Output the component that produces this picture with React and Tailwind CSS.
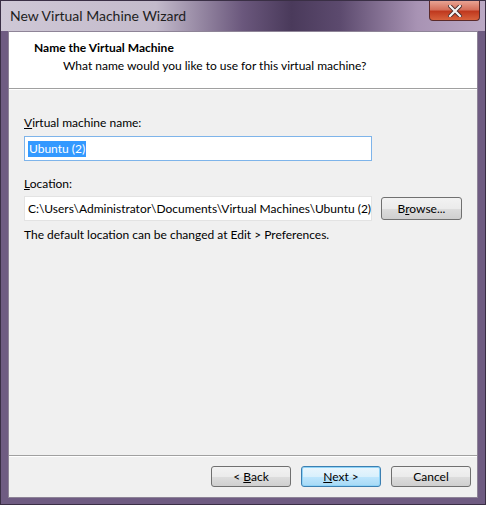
export default function App() {
  const font = { fontFamily: 'Lato, "Noto Sans", sans-serif' };

  return (
    <div
      className="w-[486px] h-[505px] flex flex-col bg-[#6f5c82] border border-[#3a2f45] text-[12px] text-black"
      style={font}
    >
      {/* title bar */}
      <div className="h-[30px] flex items-start justify-between bg-[linear-gradient(90deg,#cfc8d6_0%,#c3bacb_32%,#6a577c_50%,#4a3a5b_60%,#5c4a6e_70%,#a893b4_86%,#bba9c4_100%)]">
        <span className="pl-[9px] pt-[6px] text-[14px] leading-[18px] text-[#1e1e1e]">
          New Virtual Machine Wizard
        </span>
        <button className="mr-[5px] w-[51px] h-[20px] rounded-b-[4px] border border-t-0 border-[#5a2a2a] bg-[linear-gradient(180deg,#e8a393_0%,#d5705c_45%,#c0391f_55%,#d7623d_100%)] flex items-center justify-center">
          <svg width="14" height="12" viewBox="0 0 14 12">
            <path d="M2 1 L12 11 M12 1 L2 11" stroke="#4a2a2a" strokeWidth="4" strokeLinecap="square" />
            <path d="M2 1 L12 11 M12 1 L2 11" stroke="#f4f4f4" strokeWidth="2.2" strokeLinecap="square" />
          </svg>
        </button>
      </div>

      {/* client area */}
      <div className="flex-1 mx-[7px] mb-[6px] flex flex-col bg-[#f0f0f0] border border-[#8e8497]">
        {/* header */}
        <div className="h-[57px] bg-white border-b border-[#a0a0a0] pl-[25px] pt-[8px]">
          <div className="font-bold leading-[16px]">Name the Virtual Machine</div>
          <div className="pl-[29px] pt-[2px] leading-[16px]">
            What name would you like to use for this virtual machine?
          </div>
        </div>

        {/* body */}
        <div className="flex-1 border-t border-white pl-[15px] pt-[25px]">
          <div className="leading-[16px]">
            <span className="underline">V</span>irtual machine name:
          </div>
          <div className="mt-[5px] w-[348px] h-[25px] bg-white border border-[#7eb4ea] flex items-center pl-[3px]">
            <span className="bg-[#3399ff] text-white leading-[16px] px-[1px]">Ubuntu (2)</span>
          </div>

          <div className="mt-[15px] leading-[16px]">
            <span className="underline">L</span>ocation:
          </div>
          <div className="mt-[4px] flex items-center gap-[9px]">
            <div className="w-[348px] h-[25px] bg-white border border-[#e3e3e3] flex items-center pl-[3px] whitespace-nowrap overflow-hidden">
              C:\Users\Administrator\Documents\Virtual Machines\Ubuntu (2)
            </div>
            <button className="w-[81px] h-[23px] rounded-[3px] border border-[#707070] bg-[linear-gradient(180deg,#f2f2f2_0%,#ebebeb_50%,#dddddd_51%,#cfcfcf_100%)] leading-[16px]">
              B<span className="underline">r</span>owse...
            </button>
          </div>
          <div className="mt-[6px] leading-[16px]">
            The default location can be changed at Edit &gt; Preferences.
          </div>
        </div>

        {/* footer */}
        <div className="border-t border-[#a0a0a0]">
          <div className="border-t border-white flex justify-end gap-[10px] pt-[9px] pb-[10px] pr-[6px]">
            <button className="w-[80px] h-[21px] rounded-[3px] border border-[#707070] bg-[linear-gradient(180deg,#f2f2f2_0%,#ebebeb_50%,#dddddd_51%,#cfcfcf_100%)] leading-[16px]">
              &lt; <span className="underline">B</span>ack
            </button>
            <button className="w-[80px] h-[21px] rounded-[3px] border border-[#3c7fb1] bg-[linear-gradient(180deg,#eaf6fd_0%,#d9f0fc_50%,#bee6fd_51%,#a7d9f5_100%)] leading-[16px] shadow-[inset_0_0_0_1px_#8fd3f7]">
              <span className="underline">N</span>ext &gt;
            </button>
            <button className="w-[80px] h-[21px] rounded-[3px] border border-[#707070] bg-[linear-gradient(180deg,#f2f2f2_0%,#ebebeb_50%,#dddddd_51%,#cfcfcf_100%)] leading-[16px]">
              Cancel
            </button>
          </div>
        </div>
      </div>
    </div>
  );
}
